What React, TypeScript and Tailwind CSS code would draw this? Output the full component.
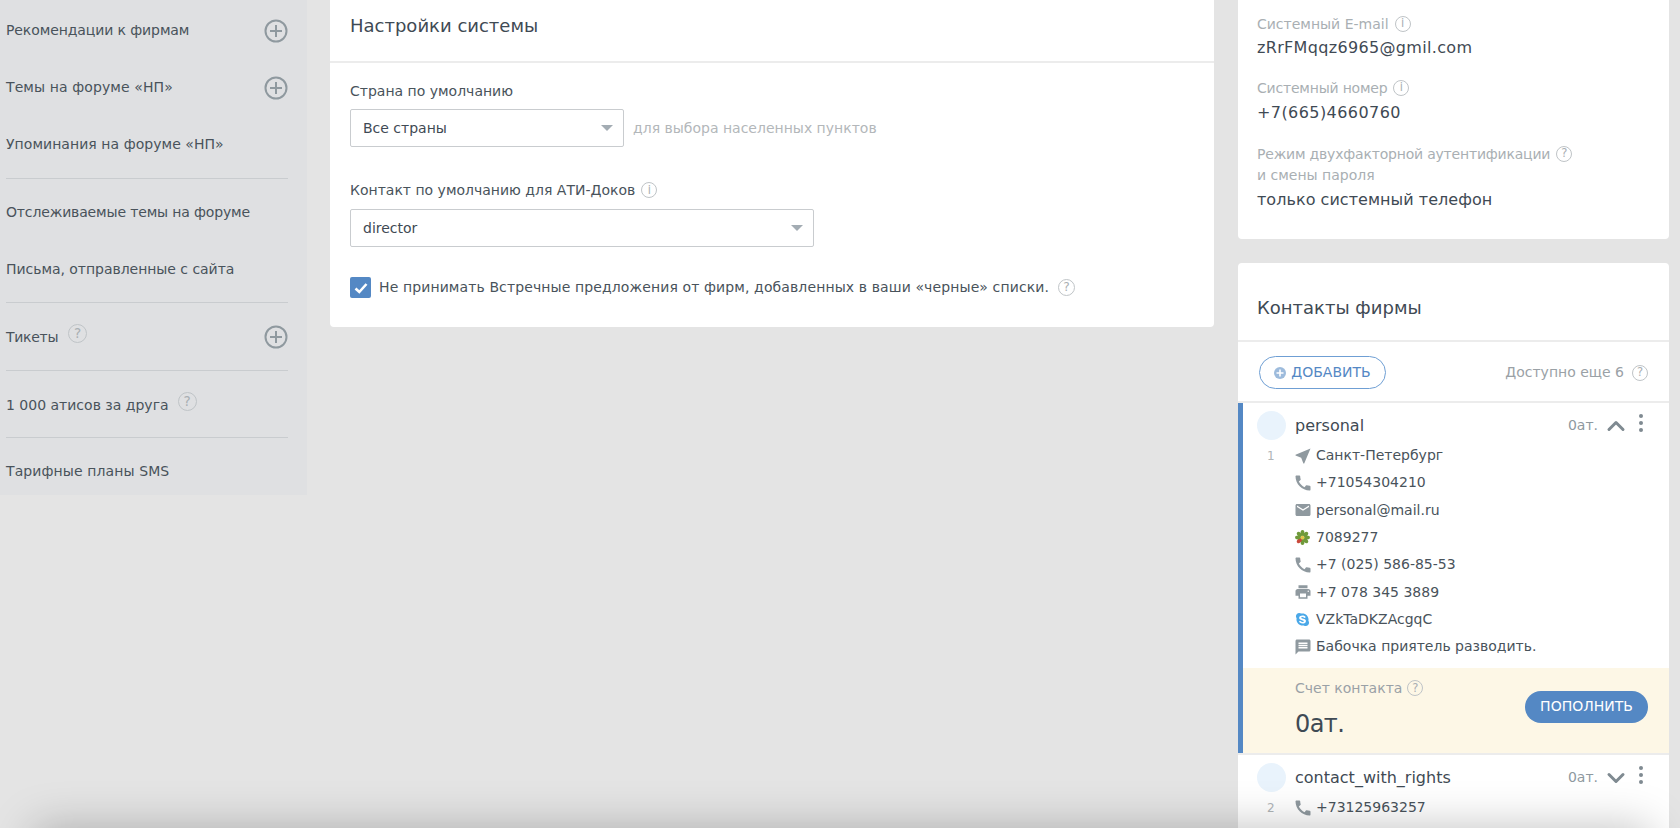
import React from 'react';
import { ChevronDown, ChevronUp } from 'lucide-react';
import { MdCall, MdEmail, MdMessage, MdNearMe, MdPrint } from 'react-icons/md';
import { FaSkype } from 'react-icons/fa';

const PlusCircle: React.FC = () => (
  <svg width="24" height="24" viewBox="0 0 24 24" fill="none" stroke="#8f999f" strokeWidth="2">
    <circle cx="12" cy="12" r="10.5" />
    <path d="M12 6v12M6 12h12" />
  </svg>
);

// round hint mark: "?" or "i" in a thin ring
const Hint: React.FC<{ mark?: string; size?: number; className?: string }> = ({ mark = '?', size = 16, className = '' }) => (
  <span
    className={`inline-flex shrink-0 items-center justify-center rounded-full border border-[#bfc4c7] text-[#a9afb3] font-normal ${className}`}
    style={{ width: size, height: size, fontSize: size * 0.72 }}
  >
    {mark}
  </span>
);

const IcqIcon: React.FC = () => (
  <svg width="15" height="15" viewBox="0 0 16 16" className="shrink-0">
    {[0, 45, 90, 135, 180, 225, 270, 315].map((a) => (
      <ellipse key={a} cx="8" cy="3.2" rx="2.1" ry="3.1" fill={a === 225 ? '#c9483a' : '#6f9a3a'} transform={`rotate(${a} 8 8)`} />
    ))}
    <circle cx="8" cy="8" r="2" fill="#e2c64a" />
  </svg>
);

const Kebab: React.FC = () => (
  <span className="flex w-[5px] flex-col gap-[3px]">
    <span className="size-[4px] rounded-full bg-[#7f8a91]" />
    <span className="size-[4px] rounded-full bg-[#7f8a91]" />
    <span className="size-[4px] rounded-full bg-[#7f8a91]" />
  </span>
);

const SideItem: React.FC<{ label: string; plus?: boolean; track?: string }> = ({ label, plus, track = '' }) => (
  <div className="flex h-[57px] items-center justify-between">
    <span className={track}>{label}</span>
    {plus && <PlusCircle />}
  </div>
);

const Sidebar: React.FC = () => (
  <aside className="h-[495px] w-[307px] shrink-0 bg-[#dfe0e2] pl-[6px] pr-[19px] pt-[2px] text-[14px] text-[#49535b]">
    <div className="border-b border-[#c9cccf] pb-[5px]">
      <SideItem label="Рекомендации к фирмам" plus track="tracking-[-0.1px]" />
      <SideItem label="Темы на форуме «НП»" plus track="tracking-[0.1px]" />
      <SideItem label="Упоминания на форуме «НП»" track="tracking-[0.05px]" />
    </div>
    <div className="border-b border-[#c9cccf] pb-[4px] pt-[5px]">
      <SideItem label="Отслеживаемые темы на форуме" track="tracking-[-0.15px]" />
      <SideItem label="Письма, отправленные с сайта" track="tracking-[-0.04px]" />
    </div>
    <div className="flex h-[68px] items-center justify-between border-b border-[#c9cccf] pt-[1px]">
      <div className="flex items-center">
        <span className="mt-[1px] tracking-[-0.3px]">Тикеты</span>
        <Hint size={19} className="ml-[10px] -mt-[8px]" />
      </div>
      <PlusCircle />
    </div>
    <div className="flex h-[67px] items-center border-b border-[#c9cccf] pt-[2px]">
      <span>1 000 атисов за друга</span>
      <Hint size={19} className="ml-[9px] -mt-[8px]" />
    </div>
    <div className="flex h-[57px] items-center pt-[9px] tracking-[0.1px]">Тарифные планы SMS</div>
  </aside>
);

const SelectBox: React.FC<{ value: string; className: string }> = ({ value, className }) => (
  <div className={`flex h-[38px] items-center justify-between rounded-[2px] border border-[#c9cccf] bg-white pl-[12px] pr-[10px] text-[#3f4a54] ${className}`}>
    <span>{value}</span>
    <span className="border-x-[6px] border-t-[6px] border-x-transparent border-t-[#a3acb3]" />
  </div>
);

const SettingsCard: React.FC = () => (
  <main className="ml-[23px] h-[327px] w-[884px] shrink-0 rounded-b-[4px] bg-white text-[14px] text-[#49535b]">
    <div className="flex h-[63px] items-center border-b-2 border-[#ececec] px-[20px] pb-[10px] text-[18px] text-[#3f4a54]">
      Настройки системы
    </div>
    <div className="px-[20px] pt-[18px]">
      <div className="leading-[20px]">Страна по умолчанию</div>
      <div className="mt-[8px] flex items-center">
        <SelectBox value="Все страны" className="w-[274px]" />
        <span className="ml-[9px] text-[#b3b7ba]">для выбора населенных пунктов</span>
      </div>
      <div className="mt-[33px] flex items-center leading-[20px]">
        Контакт по умолчанию для АТИ-Доков
        <Hint mark="i" size={16} className="ml-[6px]" />
      </div>
      <div className="mt-[9px]">
        <SelectBox value="director" className="w-[464px]" />
      </div>
      <div className="mt-[30px] flex items-center">
        <span className="flex size-[21px] items-center justify-center rounded-[2px] bg-[#5488c4]">
          <svg width="16" height="16" viewBox="0 0 16 16" fill="none" stroke="white" strokeWidth="2.6">
            <path d="M2.5 8.5l3.8 3.5L13.5 4" />
          </svg>
        </span>
        <span className="ml-[8px] tracking-[0.11px]">Не принимать Встречные предложения от фирм, добавленных в ваши «черные» списки.</span>
        <Hint size={17} className="ml-[9px] -mt-[1px]" />
      </div>
    </div>
  </main>
);

const SystemInfo: React.FC = () => (
  <section className="h-[239px] rounded-b-[4px] bg-white px-[19px] pt-[14px] text-[14px] text-[#a9afb3]">
    <div className="flex h-[20px] items-center">
      Системный E-mail
      <Hint mark="i" className="ml-[6px]" />
    </div>
    <div className="mt-[2px] h-[24px] text-[16px] leading-[24px] tracking-[0.33px] text-[#3f4a54]">zRrFMqqz6965@gmil.com</div>
    <div className="mt-[18px] flex h-[20px] items-center">
      <span className="tracking-[-0.2px]">Системный номер</span>
      <Hint mark="i" className="ml-[6px]" />
    </div>
    <div className="mt-[3px] h-[24px] text-[16px] leading-[24px] tracking-[0.43px] text-[#3f4a54]">+7(665)4660760</div>
    <div className="mt-[19px] flex h-[20px] items-center">
      <span className="tracking-[-0.2px]">Режим двухфакторной аутентификации</span>
      <Hint className="ml-[6px]" />
    </div>
    <div className="mt-[1px] h-[20px] leading-[20px]">и смены пароля</div>
    <div className="mt-[3px] h-[24px] text-[16px] leading-[24px] tracking-[0.04px] text-[#3f4a54]">только системный телефон</div>
  </section>
);

const rows: { icon: React.ReactNode; text: string }[] = [
  { icon: <MdNearMe size={20} color="#8f999f" className="shrink-0" />, text: 'Санкт-Петербург' },
  { icon: <MdCall size={20} color="#8f999f" className="shrink-0" />, text: '+71054304210' },
  { icon: <MdEmail size={18} color="#8f999f" className="shrink-0" />, text: 'personal@mail.ru' },
  { icon: <IcqIcon />, text: '7089277' },
  { icon: <MdCall size={20} color="#8f999f" className="shrink-0" />, text: '+7 (025) 586-85-53' },
  { icon: <MdPrint size={18} color="#8f999f" className="shrink-0" />, text: '+7 078 345 3889' },
  { icon: <FaSkype size={15} color="#4aa8e8" className="shrink-0" />, text: 'VZkTaDKZAcgqC' },
  { icon: <MdMessage size={18} color="#8f999f" className="shrink-0" />, text: 'Бабочка приятель разводить.' },
];

const ContactRow: React.FC<{ num?: string; icon: React.ReactNode; text: string }> = ({ num, icon, text }) => (
  <div className="flex h-[27.33px] items-center">
    <span className="w-[52px] pl-[24px] text-[12px] text-[#b0b5b8]">{num}</span>
    <span className="mr-[6px] flex w-[15px] items-center justify-center">{icon}</span>
    <span>{text}</span>
  </div>
);

const ContactHeader: React.FC<{ name: string; open?: boolean }> = ({ name, open }) => (
  <div className="flex h-[29px] items-center pl-[14px] pr-[25px]">
    <span className="size-[29px] rounded-full bg-[#e9f3fc]" />
    <span className="ml-[9px] flex-1 text-[16px] text-[#3f4a54]">{name}</span>
    <span className="text-[14px] text-[#8f999f]">0ат.</span>
    {open ? (
      <ChevronUp size={28} strokeWidth={2.6} color="#7f8a91" className="ml-[4px] shrink-0" />
    ) : (
      <ChevronDown size={28} strokeWidth={2.6} color="#7f8a91" className="ml-[4px] shrink-0" />
    )}
    <span className="ml-[9px] -mt-[6px] flex">
      <Kebab />
    </span>
  </div>
);

const ContactsCard: React.FC = () => (
  <section className="mt-[24px] rounded-t-[4px] bg-white text-[14px] text-[#49535b]">
    <div className="flex h-[79px] items-center border-b-2 border-[#ececec] px-[19px] pt-[11px] text-[18px] text-[#3f4a54]">
      Контакты фирмы
    </div>
    <div className="flex h-[61px] items-center justify-between border-b-2 border-[#ececec] pl-[21px] pr-[21px] pt-[2px]">
      <button className="flex h-[33px] w-[127px] items-center justify-center rounded-full border border-[#6f9fd4] text-[14px] text-[#5488c4]">
        <span className="mr-[5px] flex size-[12px] items-center justify-center rounded-full bg-[#9dbbdc]">
          <svg width="8" height="8" viewBox="0 0 8 8" stroke="white" strokeWidth="1.6">
            <path d="M4 0.5v7M0.5 4h7" />
          </svg>
        </span>
        ДОБАВИТЬ
      </button>
      <span className="flex items-center text-[#9aa1a6]">
        Доступно еще 6
        <Hint className="ml-[8px]" />
      </span>
    </div>
    <div className="h-[350px] border-l-[5px] border-[#5488c4]">
      <div className="pt-[8px]">
        <ContactHeader name="personal" open />
        <div className="pt-[2px]">
          {rows.map((r, i) => (
            <ContactRow key={r.text} num={i === 0 ? '1' : undefined} icon={r.icon} text={r.text} />
          ))}
        </div>
      </div>
      <div className="mt-[7px] flex h-[85px] items-center justify-between bg-[#fdf7e6] pl-[52px] pr-[21px]">
        <div className="-mt-[2px]">
          <div className="flex h-[20px] items-center text-[#9aa1a6]">
            Счет контакта
            <Hint className="ml-[5px]" />
          </div>
          <div className="mt-[10px] text-[24px] leading-[32px] tracking-[-0.6px] text-[#3f4a54]">0ат.</div>
        </div>
        <button className="-mt-[7px] h-[32px] w-[123px] rounded-full bg-[#5488c4] text-[14px] text-white">ПОПОЛНИТЬ</button>
      </div>
    </div>
    <div className="h-[200px] border-t-2 border-[#ececec] pl-[5px] pt-[8px]">
      <ContactHeader name="contact_with_rights" />
      <div className="pt-[2px]">
        <ContactRow num="2" icon={<MdCall size={20} color="#8f999f" className="shrink-0" />} text="+73125963257" />
      </div>
    </div>
  </section>
);

const App: React.FC = () => (
  <div className="relative flex h-[828px] w-[1680px] items-start overflow-hidden bg-[#e4e4e4] font-['DejaVu_Sans',sans-serif]">
    <Sidebar />
    <SettingsCard />
    <div className="ml-[24px] w-[431px] shrink-0">
      <SystemInfo />
      <ContactsCard />
    </div>
    {/* shadow of a panel sitting just below the fold */}
    <div className="absolute left-[35px] right-[30px] top-[828px] h-[100px] shadow-[0_0_45px_0_rgba(0,0,0,0.25)]" />
  </div>
);

export default App;
